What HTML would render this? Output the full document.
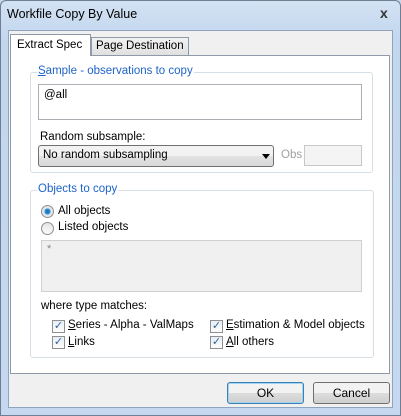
<!DOCTYPE html>
<html><head><style>
*{margin:0;padding:0;box-sizing:border-box}
body{width:401px;height:416px;position:relative;font-family:"Liberation Sans",sans-serif;font-size:11.5px;color:#000;background:#c6d8ee;overflow:hidden}
.a{position:absolute}
#frame{left:0;top:0;width:401px;height:416px;border:1px solid #6d7f95;border-radius:6px 6px 0 0;background:linear-gradient(#d3e2f3,#c2d6ee 40px,#c5d8ef)}
#client{left:8px;top:30px;width:385px;height:378px;background:#f0f0f0;border:1px solid #8ea3bd}
#panel{left:10px;top:55px;width:380px;height:319px;background:#fff;border:1px solid #8e9aa8}
.tab{border:1px solid #8e9aa8;border-bottom:none;background:linear-gradient(#f2f2f2,#e0e0e0);padding:0 4px;line-height:17px}
.grp{border:1px solid #d5dfe5;border-radius:3px}
.lg{color:#1e64c8;background:#fff;padding:0 1px}
.inp{background:#fff;border:1px solid #abadb3;border-top-color:#aeb3b9}
.cb{width:13px;height:13px;border:1px solid #8f8f8f;background:linear-gradient(#e6eef6,#fdfdfd);font-size:11px;line-height:11px;text-align:center;color:#3d5f92}
.rd{width:13px;height:13px;border:1px solid #8f8f8f;border-radius:50%;background:linear-gradient(#e6e6e6,#fafafa)}
.btn{border:1px solid #707070;border-radius:3px;background:linear-gradient(#f2f2f2 50%,#dddddd 50%,#cfcfcf);text-align:center;line-height:20px;font-size:12px}
</style></head><body>
<div id="frame" class="a"></div>
<div class="a" style="left:7px;top:7px;font-size:12.5px">Workfile Copy By Value</div>
<div class="a" style="left:380px;top:5px;font-size:14px;font-weight:bold;color:#333">x</div>
<div id="client" class="a"></div>
<div id="panel" class="a"></div>
<div class="a tab" style="left:91px;top:37px;height:18px;">Page Destination</div>
<div class="a tab" style="left:10px;top:34px;height:22px;width:81px;background:#fff;line-height:21px;padding-left:6px">Extract Spec</div>

<div class="a grp" style="left:30px;top:72px;width:343px;height:101px"></div>
<div class="a lg" style="left:37px;top:65px"><u>S</u>ample - observations to copy</div>
<div class="a inp" style="left:38px;top:84px;width:324px;height:36px;"></div>
<div class="a" style="left:44px;top:89px">@all</div>
<div class="a" style="left:40px;top:131px">Random subsample:</div>
<div class="a" style="left:38px;top:145px;width:236px;height:22px;border:1px solid #707070;border-radius:3px;background:linear-gradient(#f2f2f2 50%,#e3e3e3 50%,#d9d9d9)"></div>
<div class="a" style="left:43px;top:149px">No random subsampling</div>
<div class="a" style="left:262px;top:154px;width:0;height:0;border-left:4px solid transparent;border-right:4px solid transparent;border-top:5px solid #000"></div>
<div class="a" style="left:281px;top:149px;color:#a0a0a0">Obs</div>
<div class="a" style="left:304px;top:145px;width:58px;height:21px;border:1px solid #c8c8c8;background:#f4f4f4"></div>

<div class="a grp" style="left:30px;top:190px;width:344px;height:168px"></div>
<div class="a lg" style="left:37px;top:183px">Objects to copy</div>
<div class="a rd" style="left:41px;top:205px;background:radial-gradient(circle,#1a6fb0 0,#2a8ad0 2.5px,#e0e8ef 3.5px)"></div>
<div class="a" style="left:58px;top:205px">All objects</div>
<div class="a rd" style="left:41px;top:222px"></div>
<div class="a" style="left:58px;top:221px">Listed objects</div>
<div class="a" style="left:41px;top:240px;width:321px;height:52px;background:#f0f0f0;border:1px solid #d0d0d0"></div>
<div class="a" style="left:47px;top:243px;color:#888;font-size:11px">*</div>
<div class="a" style="left:41px;top:300px">where type matches:</div>
<div class="a cb" style="left:52px;top:320px">✓</div>
<div class="a" style="left:68px;top:319px"><u>S</u>eries - Alpha - ValMaps</div>
<div class="a cb" style="left:52px;top:336px">✓</div>
<div class="a" style="left:68px;top:336px"><u>L</u>inks</div>
<div class="a cb" style="left:210px;top:320px">✓</div>
<div class="a" style="left:226px;top:319px"><u>E</u>stimation &amp; Model objects</div>
<div class="a cb" style="left:210px;top:336px">✓</div>
<div class="a" style="left:226px;top:336px"><u>A</u>ll others</div>

<div class="a btn" style="left:227px;top:382px;width:77px;height:22px;border-color:#3c7fb1;box-shadow:inset 0 0 0 1px #9fd4f4">OK</div>
<div class="a btn" style="left:313px;top:382px;width:77px;height:22px">Cancel</div>
</body></html>
